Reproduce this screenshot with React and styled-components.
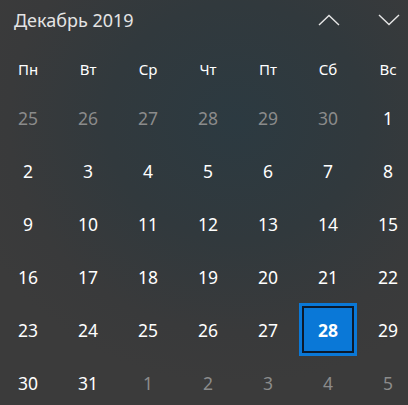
import React from "react";
import styled, { createGlobalStyle } from "styled-components";

const GlobalStyle = createGlobalStyle`
	html, body {
		margin: 0;
		padding: 0;
		background: #363839;
	}
	body {
		font-family: "Noto Sans", "Open Sans", "DejaVu Sans", sans-serif;
	}
`;

const Panel = styled.div`
	width: 408px;
	height: 405px;
	overflow: hidden;
	background: radial-gradient(
		ellipse 70% 65% at 58% 30%,
		#2c3a41 0%,
		#31393d 45%,
		#393a3b 80%,
		#3b3b3b 100%
	);
	color: #fff;
`;

const Header = styled.div`
	height: 40px;
	display: flex;
	align-items: center;
	padding-left: 14px;
`;

const Title = styled.div`
	flex: 1;
	font-size: 18px;
	color: #e4e4e4;
`;

const NavButton = styled.button`
	width: 60px;
	height: 40px;
	border: 0;
	padding: 0;
	background: transparent;
	display: flex;
	align-items: center;
	justify-content: center;
	cursor: pointer;
	margin-right: ${({ last }) => (last ? "-11px" : "0")};
`;

const Grid = styled.div`
	display: grid;
	grid-template-columns: repeat(7, 60px);
	margin-left: -2px;
`;

const WeekRow = styled(Grid)`
	margin-top: 7px;
	height: 44px;
	align-items: center;
`;

const WeekDay = styled.div`
	text-align: center;
	font-size: 15px;
	color: #fff;
`;

const DayGrid = styled(Grid)`
	grid-auto-rows: 53px;
`;

const Day = styled.div`
	display: flex;
	align-items: center;
	justify-content: center;
	font-size: 17.5px;
	color: ${({ muted }) => (muted ? "#8b8b8b" : "#ffffff")};
`;

const Selected = styled.div`
	width: 58px;
	height: 53px;
	box-sizing: border-box;
	display: flex;
	align-items: center;
	justify-content: center;
	background: #0a78d7;
	border: 3px solid #0a78d7;
	box-shadow: inset 0 0 0 2px #0c1a2c;
	font-weight: 700;
	font-size: 17.5px;
	color: #fff;
`;

const Chevron = ({ up }) => (
	<svg width="22" height="12" viewBox="0 0 22 12">
		<polyline
			points={up ? "1,11 11,1.5 21,11" : "1,1 11,10.5 21,1"}
			fill="none"
			stroke="#e6e6e6"
			strokeWidth="1.4"
		/>
	</svg>
);

const weekDays = ["Пн", "Вт", "Ср", "Чт", "Пт", "Сб", "Вс"];

const days = [
	...[25, 26, 27, 28, 29, 30].map(n => ({ n, muted: true })),
	...Array.from({ length: 31 }, (_, i) => ({ n: i + 1 })),
	...[1, 2, 3, 4, 5].map(n => ({ n, muted: true })),
];

export default function App() {
	return (
		<>
			<GlobalStyle />
			<Panel>
				<Header>
					<Title>Декабрь 2019</Title>
					<NavButton aria-label="Предыдущий месяц">
						<Chevron up />
					</NavButton>
					<NavButton last aria-label="Следующий месяц">
						<Chevron />
					</NavButton>
				</Header>
				<WeekRow>
					{weekDays.map(d => (
						<WeekDay key={d}>{d}</WeekDay>
					))}
				</WeekRow>
				<DayGrid>
					{days.map((d, i) => (
						<Day key={i} muted={d.muted}>
							{!d.muted && d.n === 28 ? <Selected>28</Selected> : d.n}
						</Day>
					))}
				</DayGrid>
			</Panel>
		</>
	);
}
